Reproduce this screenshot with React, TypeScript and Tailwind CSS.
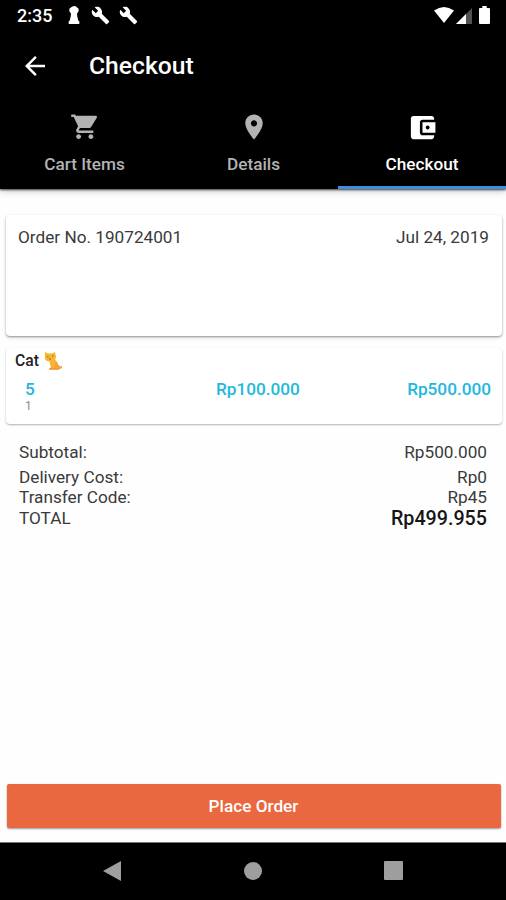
import type { ReactNode } from "react";

function Icon({ d, className }: { d: string; className: string }) {
  return (
    <svg viewBox="0 0 24 24" fill="currentColor" className={className}>
      <path d={d} />
    </svg>
  );
}

const WRENCH =
  "M22.7 19l-9.1-9.1c.9-2.3.4-5-1.5-6.9-2-2-5-2.4-7.4-1.3L9 6 6 9 1.6 4.7C.4 7.1.9 10.1 2.9 12.1c1.9 1.9 4.6 2.4 6.9 1.5l9.1 9.1c.4.4 1 .4 1.4 0l2.3-2.3c.5-.4.5-1.1.1-1.4z";
const BACK = "M20 11H7.83l5.59-5.59L12 4l-8 8 8 8 1.41-1.41L7.83 13H20v-2z";
const CART =
  "M7 18c-1.100 0-1.990.9-1.990 2S5.900 22 7 22s2-.9 2-2-.9-2-2-2zM1 2v2h2l3.600 7.590-1.350 2.450c-.16.28-.25.61-.25.96 0 1.100.9 2 2 2h12v-2H7.420c-.14 0-.25-.11-.25-.25l.03-.12.9-1.630h7.450c.75 0 1.410-.41 1.750-1.030L21.900 4.500c.08-.14.1-.2.1-.32 0-.65-.45-1.180-1-1.180H4.750L4.270 2H1zm16 16c-1.100 0-1.990.9-1.990 2s.89 2 1.990 2 2-.9 2-2-.9-2-2-2z";
const PLACE =
  "M12 2C8.13 2 5 5.13 5 9c0 5.25 7 13 7 13s7-7.75 7-13c0-3.87-3.13-7-7-7zm0 9.5c-1.38 0-2.5-1.12-2.5-2.5s1.12-2.5 2.5-2.5 2.5 1.12 2.5 2.5-1.12 2.5-2.5 2.5z";
const WALLET =
  "M21 18v1c0 1.1-.9 2-2 2H5c-1.11 0-2-.9-2-2V5c0-1.1.89-2 2-2h14c1.1 0 2 .9 2 2v1h-9c-1.11 0-2 .9-2 2v8c0 1.1.89 2 2 2h9zm-9-2h10V8H12v8zm4-2.5c-.83 0-1.5-.67-1.5-1.5s.67-1.5 1.5-1.5 1.5.67 1.5 1.5-.67 1.5-1.5 1.5z";

function StatusBar() {
  return (
    <div className="flex h-8 items-center pl-[17px] pr-4">
      <span className="w-[51px] text-[18px] font-medium leading-8">2:35</span>
      <svg viewBox="0 0 12 19" fill="currentColor" className="-mt-[2px] h-[18px] w-3">
        <path d="M6 0C8 0 8.800.8 9.200 1.600Q11.300 2 11 4.500 10.800 7 9.300 7.500V10l1.200 5.500H11q.6 0 .6.600V19H.4v-2.900q0-.6.600-.6h.5L2.700 10V7.500Q1.200 7 1 4.500.7 2 2.800 1.600 3.200.8 6 0z" />
      </svg>
      <Icon d={WRENCH} className="-mt-[2px] ml-[11px] size-[19px]" />
      <Icon d={WRENCH} className="-mt-[2px] ml-[9px] size-[19px]" />
      <svg viewBox="0 0 20 16" fill="currentColor" className="-mt-[3px] ml-auto h-4 w-5">
        <path d="M0 3.500Q10-3.500 20 3.500L10 16z" />
      </svg>
      <svg viewBox="0 0 16 16" fill="currentColor" className="-mt-px ml-[2px] h-4 w-4">
        <path d="M16 0v16H0z" opacity=".32" />
        <path d="M10 6v10H0z" />
      </svg>
      <svg viewBox="0 0 11 18" fill="currentColor" className="-mt-[2px] ml-[7px] h-[18px] w-[11px]">
        <path d="M3.300 0h4.400v2H10q1 0 1 1v14q0 1-1 1H1q-1 0-1-1V3q0-1 1-1h2.300z" />
      </svg>
    </div>
  );
}

function Tab({
  icon,
  iconSize,
  label,
  active = false,
}: {
  icon: string;
  iconSize: string;
  label: string;
  active?: boolean;
}) {
  return (
    <div
      className={`flex flex-col items-center border-b-[3px] pt-[11px] ${
        active ? "border-[#3b8fdf] text-white" : "border-transparent text-[#b3b3b3]"
      }`}
    >
      <div className="flex h-8 items-center">
        <Icon d={icon} className={iconSize} />
      </div>
      <span className="mt-[9px] text-[17.200px] font-medium leading-[25px]">{label}</span>
    </div>
  );
}

function Row({ label, children, className }: { label: string; children: ReactNode; className: string }) {
  return (
    <div className={`flex items-center justify-between ${className}`}>
      <span>{label}</span>
      {children}
    </div>
  );
}

function Cat() {
  return (
    <svg viewBox="0 0 18 18" className="ml-[5px] h-[18px] w-[18px]">
      <path d="M6 8l5 0q3 2 3.500 5l2 1.500 1.500-1v2q-1 2-4 2H5.500V16l1.500-.5z" fill="#f8a33a" />
      <path d="M1 0l3 1.500h4L11 0l1 5q0 4-5 4.500Q1 9.500.8 6z" fill="#f8b62f" />
      <path d="M5 8h5q2 1 1.500 4L10 15.500H7z" fill="#fbb42f" />
      <path d="M3 4.500l1.500.5M8 4.200l1.500-.5M5 7l2 0" stroke="#8a742b" strokeWidth="1" />
      <path d="M5 17h10" stroke="#f58a3f" strokeWidth="1.200" />
    </svg>
  );
}

export default function App() {
  return (
    <div className="flex h-[900px] w-[506px] flex-col overflow-hidden bg-[#fefefe] font-['Roboto',sans-serif] text-[#3a3a3a]">
      <header className="bg-black text-white shadow-[0_1px_2px_rgba(0,0,0,0.7),0_3px_7px_rgba(0,0,0,0.18)]">
        <StatusBar />
        <div className="flex h-[68px] items-center pb-px pl-5">
          <Icon d={BACK} className="size-[30px]" />
          <h1 className="ml-[39px] text-[24.700px] font-medium">Checkout</h1>
        </div>
        <nav className="grid h-[89px] grid-cols-[169px_169px_168px]">
          <Tab icon={CART} iconSize="size-[29.500px]" label="Cart Items" />
          <Tab icon={PLACE} iconSize="size-[30px]" label="Details" />
          <Tab icon={WALLET} iconSize="size-[31px]" label="Checkout" active />
        </nav>
      </header>

      <main className="flex flex-1 flex-col">
        <section className="ml-[6px] mr-1 mt-[26px] h-[121px] rounded-[4px] bg-white pl-3 pr-[13px] pt-[10px] shadow-[0_1px_2px_rgba(0,0,0,0.36),0_2px_4px_rgba(0,0,0,0.1)]">
          <Row label="Order No. 190724001" className="h-[26px] text-[17.200px]">
            <span>Jul 24, 2019</span>
          </Row>
        </section>

        <section className="ml-[6px] mr-1 mt-3 h-[76px] rounded-[4px] bg-white pl-[9px] pr-[11px] shadow-[0_1px_2px_rgba(60,60,90,0.4)]">
          <div className="flex h-[26px] items-center text-[15.700px] font-medium text-[#222]">
            Cat
            <Cat />
          </div>
          <div className="mt-[5px] flex h-5 items-center text-[17.200px] font-medium leading-5 text-[#22b8dc]">
            <span className="w-[201px] pl-[10px]">5</span>
            <span>Rp100.000</span>
            <span className="ml-auto">Rp500.000</span>
          </div>
          <div className="mt-px pl-[10px] text-[12px] leading-[12px] text-[#8a8a8a]">1</div>
        </section>

        <section className="mt-[17px] pl-[19px] pr-[19px] text-[17.200px]">
          <Row label="Subtotal:" className="h-6">
            <span>Rp500.000</span>
          </Row>
          <Row label="Delivery Cost:" className="h-[26px]">
            <span>Rp0</span>
          </Row>
          <Row label="Transfer Code:" className="h-[14px]">
            <span>Rp45</span>
          </Row>
          <Row label="TOTAL" className="h-7">
            <span className="text-[19.700px] font-medium text-[#161616]">Rp499.955</span>
          </Row>
        </section>

        <button className="mb-[14px] ml-[7px] mr-[5px] mt-auto h-11 rounded-[2px] bg-[#ea6840] pr-px pt-px text-[17.200px] font-medium text-white shadow-[0_1px_2px_rgba(0,0,0,0.4)]">
          Place Order
        </button>
      </main>

      <footer className="flex h-[58px] items-center border-t border-[#777] bg-black pb-[2px] text-[#9e9e9e]">
        <svg viewBox="0 0 18 20" fill="currentColor" className="ml-[103px] h-5 w-[18px]">
          <path d="M18 0v20L0 10z" />
        </svg>
        <span className="ml-[123px] size-[18px] rounded-full bg-[#9e9e9e]" />
        <span className="ml-[122px] size-[19px] rounded-[1px] bg-[#9e9e9e]" />
      </footer>
    </div>
  );
}
